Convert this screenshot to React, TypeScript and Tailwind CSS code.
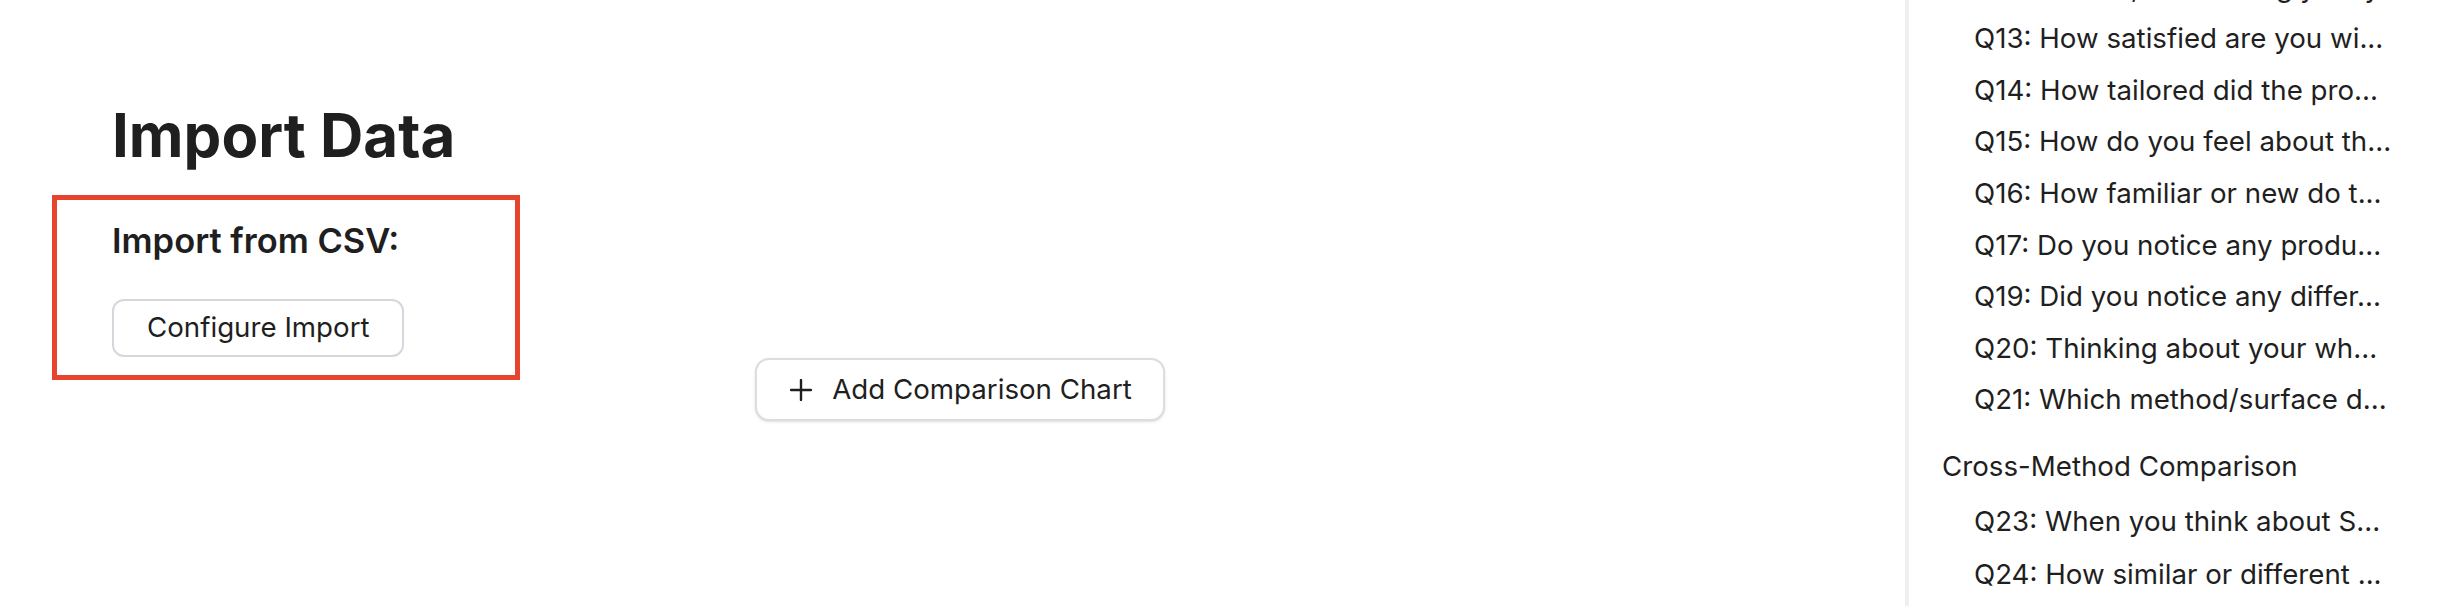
import React from 'react';

const firstGroup = [
  'Q12: Overall, how strongly do y...',
  'Q13: How satisfied are you wi...',
  'Q14: How tailored did the pro...',
  'Q15: How do you feel about th...',
  'Q16: How familiar or new do t...',
  'Q17: Do you notice any produ...',
  'Q19: Did you notice any differ...',
  'Q20: Thinking about your wh...',
  'Q21: Which method/surface d...',
];

const crossMethod = [
  'Q23: When you think about S...',
  'Q24: How similar or different ...',
];

const PlusIcon = () => (
  <svg width="22" height="22" viewBox="0 0 22 22" fill="none" stroke="currentColor" strokeWidth="2.4" strokeLinecap="round">
    <path d="M11 1v20M1 11h20" />
  </svg>
);

const App = () => {
  return (
    <div className="flex h-[606px] w-full overflow-hidden bg-white text-[#1f1f1f] font-['Inter',sans-serif]">
      {/* main panel */}
      <main className="flex-1 pl-[112px] pr-[97px] pt-[103px]">
        <h1 className="text-[60px] leading-[64px] font-bold">Import Data</h1>

        <section className="relative mt-[49.5px]">
          {/* highlight annotation */}
          <div className="pointer-events-none absolute -left-[60px] -top-[21.5px] w-[468px] h-[185px] border-[5px] border-[#e8432d]" />
          <h2 className="text-[34.5px] leading-[48px] font-semibold">Import from CSV:</h2>
          <button className="mt-[34.5px] h-[58px] pl-[33px] pr-[32px] rounded-[12px] border-2 border-[#d6d7dd] bg-white text-[27.7px] leading-none">
            Configure Import
          </button>
        </section>

        <div className="mt-[1px] flex justify-center">
          <button className="flex h-[63px] items-center gap-[20px] pl-[33px] pr-[31px] rounded-[14px] border-2 border-[#dddddd] bg-white text-[27.7px] leading-none shadow-sm">
            <PlusIcon />
            <span>Add Comparison Chart</span>
          </button>
        </div>
      </main>

      {/* question navigator */}
      <aside className="w-[559px] shrink-0 h-full overflow-hidden border-l-4 border-[#efefef]">
        <div className="-mt-[38.4px] text-[27.7px] whitespace-nowrap">
          <ul>
            {firstGroup.map((q) => (
              <li key={q} className="pl-[65px] leading-[51.6px]">{q}</li>
            ))}
          </ul>
          <div className="mt-[15px] pl-[33px] leading-[51.6px]">Cross-Method Comparison</div>
          <ul className="mt-[2.5px]">
            {crossMethod.map((q) => (
              <li key={q} className="pl-[65px] leading-[53px]">{q}</li>
            ))}
          </ul>
        </div>
      </aside>
    </div>
  );
};

export default App;
